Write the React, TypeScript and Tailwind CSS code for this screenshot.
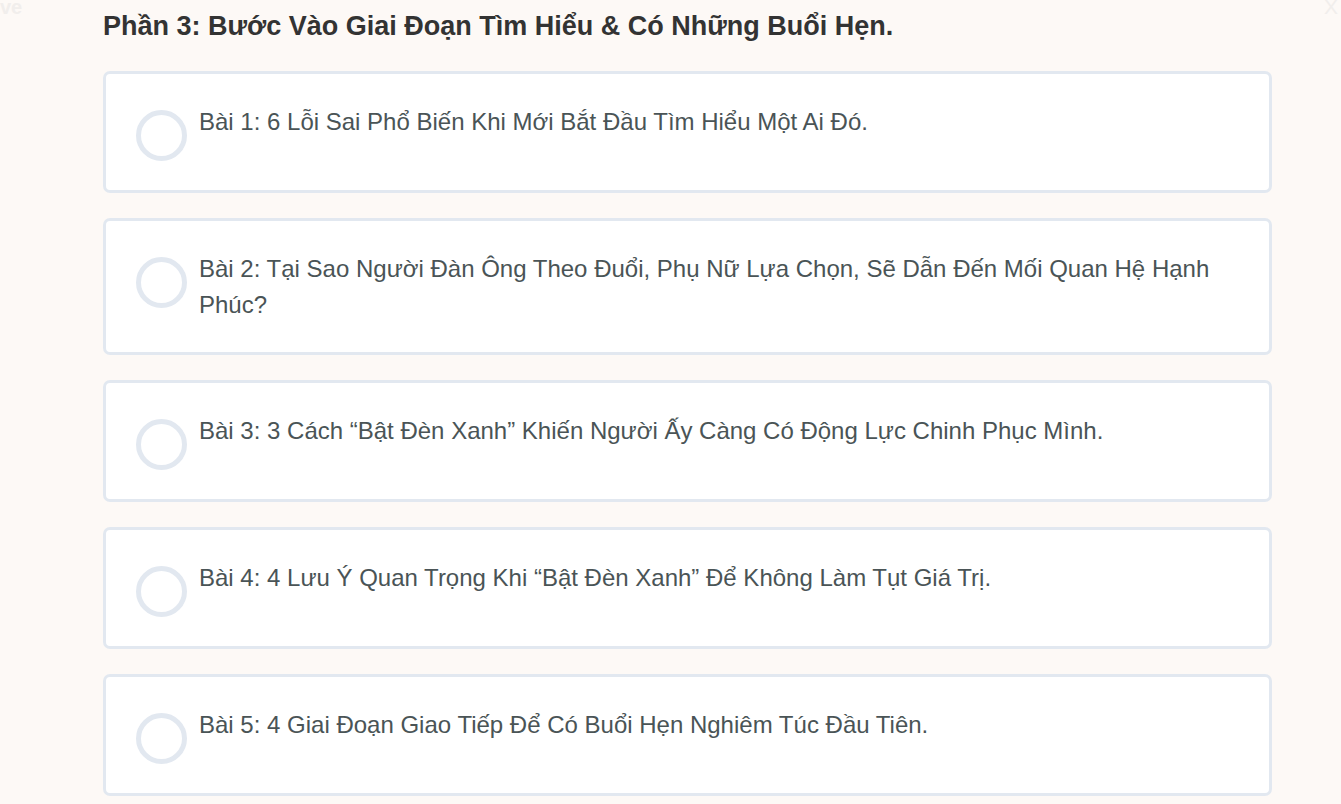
import React from 'react';

const lessons = [
  'Bài 1: 6 Lỗi Sai Phổ Biến Khi Mới Bắt Đầu Tìm Hiểu Một Ai Đó.',
  'Bài 2: Tại Sao Người Đàn Ông Theo Đuổi, Phụ Nữ Lựa Chọn, Sẽ Dẫn Đến Mối Quan Hệ Hạnh Phúc?',
  'Bài 3: 3 Cách “Bật Đèn Xanh” Khiến Người Ấy Càng Có Động Lực Chinh Phục Mình.',
  'Bài 4: 4 Lưu Ý Quan Trọng Khi “Bật Đèn Xanh” Để Không Làm Tụt Giá Trị.',
  'Bài 5: 4 Giai Đoạn Giao Tiếp Để Có Buổi Hẹn Nghiêm Túc Đầu Tiên.',
];

export default function App() {
  return (
    <div className="relative min-h-screen bg-[#fdf9f6] font-['Liberation_Sans',Arial,sans-serif] overflow-hidden">
      {/* faint overlay text from the underlying page */}
      <span className="absolute left-0 -top-[5px] text-[20px] leading-[24px] font-bold text-[#f1eeec] select-none">ve</span>
      <span className="absolute right-[3px] -top-[5px] text-[21px] leading-[24px] text-[#f1eeec] select-none">X</span>

      <div className="pl-[103px] pt-[10px] w-[1272px]">
        <h2 className="text-[27px] leading-[32px] font-bold text-[#333333] mb-[29px]">
          Phần 3: Bước Vào Giai Đoạn Tìm Hiểu &amp; Có Những Buổi Hẹn.
        </h2>

        <div className="flex flex-col gap-[25px]">
          {lessons.map((title) => (
            <div
              key={title}
              className="flex items-start gap-[12px] bg-white border-[3px] border-[#e2e8f0] rounded-[7px] px-[30px] pt-[30px] pb-[29px]"
            >
              <div className="shrink-0 mt-[6px] w-[51px] h-[51px] rounded-full border-[5px] border-[#e2e8f0]" />
              <p className="text-[24px] leading-[36px] text-[#4a5456]">{title}</p>
            </div>
          ))}
        </div>
      </div>
    </div>
  );
}
